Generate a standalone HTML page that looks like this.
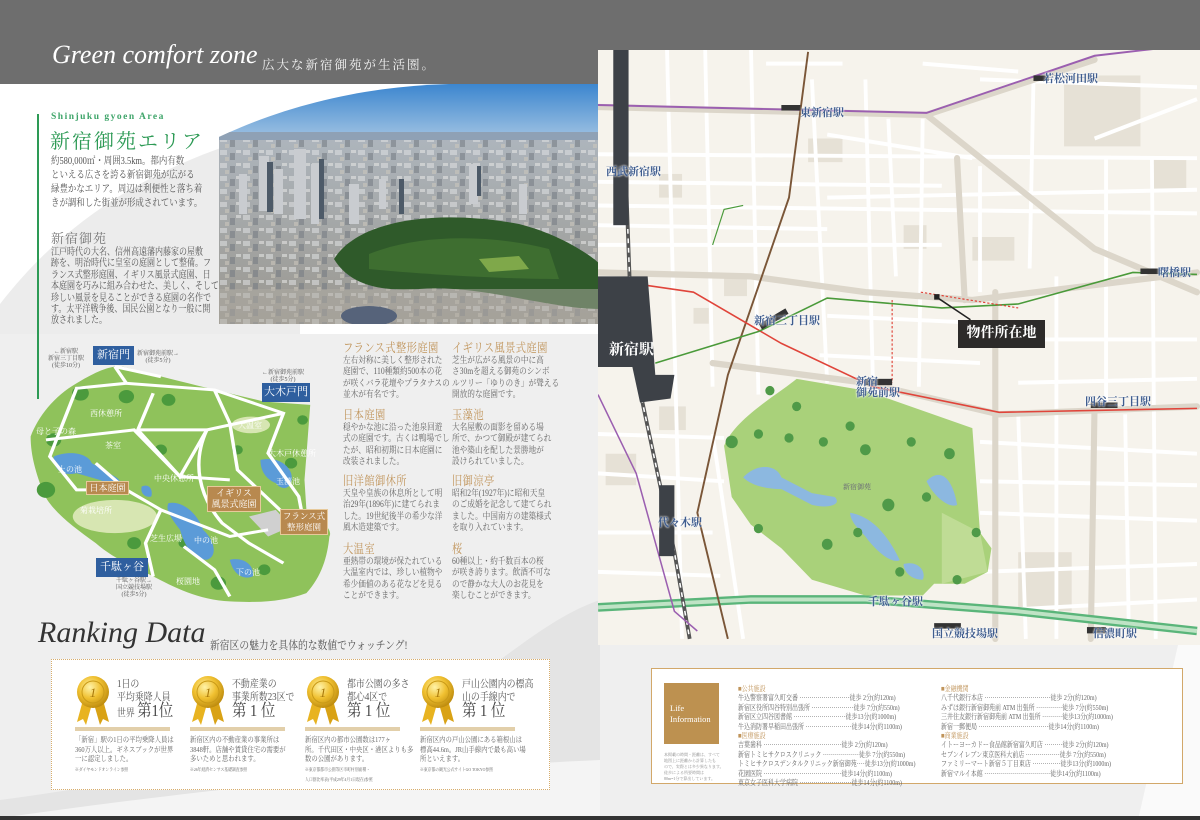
<!DOCTYPE html>
<html><head><meta charset="utf-8">
<style>
*{margin:0;padding:0;box-sizing:border-box}
body{width:1200px;height:820px;overflow:hidden;background:#efefef;font-family:"Liberation Serif","Noto Serif CJK SC",serif;position:relative;color:#555}
.a{position:absolute;white-space:nowrap}
.sx{transform-origin:0 0}
.p{position:absolute;font-size:9px;line-height:11.4px;color:#666;white-space:nowrap;transform:scaleX(.85);transform-origin:0 0}
.h{position:absolute;font-size:12.5px;color:#c0945a;letter-spacing:0.5px;transform:scaleX(.82);transform-origin:0 0;white-space:nowrap}
.st{position:absolute;font-size:11px;font-weight:bold;color:#3f5d8f;white-space:nowrap;text-shadow:0 0 2px #fff,0 0 2px #fff}
.gb{position:absolute;background:#2f5f9f;color:#fff;font-size:11px;text-align:center}
.tb{position:absolute;background:#b8894f;color:#fff;font-size:9px;text-align:center;line-height:11px;border:1px solid #e7c99a}
.sm{position:absolute;font-size:6px;color:#555;line-height:7px;text-align:center;white-space:nowrap}
.rk{position:absolute;font-size:10.5px;line-height:13px;color:#555;white-space:nowrap;transform:scaleX(.85);transform-origin:0 0}
.rk b{font-size:17px;font-weight:normal;color:#444;line-height:13px}
.rb{position:absolute;font-size:7.5px;line-height:9.6px;color:#666;white-space:nowrap;transform:scaleX(.85);transform-origin:0 0}
.li{position:absolute;font-size:7.5px;line-height:9.4px;color:#666;white-space:pre;transform:scaleX(.8);transform-origin:0 0}
.li span{color:#c0945a}
.ml{position:absolute;font-size:8px;color:#fff;white-space:nowrap}
</style></head><body>
<!-- header -->
<div class="a" style="left:0;top:0;width:1200px;height:50px;background:#6e6e6e"></div>
<div class="a" style="left:0;top:0;width:598px;height:84px;background:#6e6e6e"></div>
<div class="a" style="left:52px;top:40px;font-size:26px;font-style:italic;color:#fff;font-family:'Liberation Serif',serif">Green comfort zone</div>
<div class="a" style="left:262px;top:55px;font-size:12.5px;color:#f2f2f2;letter-spacing:2px">広大な新宿御苑が生活圏。</div>

<!-- left top white area and swoosh -->
<svg class="a" style="left:0;top:84px" width="600" height="270">
<rect width="600" height="270" fill="#fff"/>
<path d="M0 220 C70 130 160 75 300 40 L300 270 L0 270Z" fill="#ececec"/>
<path d="M0 250 L0 270 L600 270 L600 250Z" fill="#efefef"/>
</svg>
<!-- photo -->
<svg class="a" style="left:219px;top:84px" width="381" height="240">
<defs>
<linearGradient id="sky" x1="0" y1="0" x2="0" y2="1"><stop offset="0" stop-color="#3c86cf"/><stop offset="1" stop-color="#a9c8e4"/></linearGradient>
<linearGradient id="city" x1="0" y1="0" x2="0" y2="1"><stop offset="0" stop-color="#aeb6be"/><stop offset="1" stop-color="#9a978f"/></linearGradient>
<pattern id="bld" width="23" height="13" patternUnits="userSpaceOnUse">
<rect x="1" y="1" width="7" height="5" fill="#dfe1e2"/><rect x="11" y="4" width="5" height="7" fill="#737981"/><rect x="6" y="8" width="4" height="4" fill="#cdc8bd"/><rect x="17" y="1" width="5" height="3" fill="#e8e8e6"/>
</pattern>
<clipPath id="pc"><path d="M0 53 C70 20 150 2 230 0 L381 0 L381 240 L0 240Z"/></clipPath>
</defs>
<g clip-path="url(#pc)">
<rect width="381" height="60" fill="url(#sky)"/>
<rect y="48" width="381" height="192" fill="url(#city)"/>
<rect y="56" width="381" height="184" fill="url(#bld)" opacity=".55"/>
<rect y="48" width="381" height="8" fill="#8fa1b5"/>
<g fill="#c9ccd0">
<rect x="20" y="90" width="8" height="40"/><rect x="40" y="72" width="10" height="55"/><rect x="55" y="85" width="9" height="45"/><rect x="75" y="65" width="12" height="70"/><rect x="92" y="80" width="8" height="60"/><rect x="130" y="100" width="10" height="40"/><rect x="160" y="95" width="7" height="30"/><rect x="250" y="80" width="9" height="40"/><rect x="300" y="100" width="8" height="30"/>
</g>
<g fill="#4d5a68"><rect x="48" y="78" width="6" height="50"/><rect x="100" y="75" width="5" height="60"/><rect x="180" y="95" width="5" height="35"/><rect x="258" y="82" width="4" height="30"/></g>
<path d="M115 175 C140 135 220 125 300 140 C340 150 370 170 381 180 L381 225 C330 225 260 200 200 205 C160 208 130 200 115 175Z" fill="#2f5a2a"/>
<path d="M150 170 C200 150 270 150 330 165 L340 195 C280 195 200 190 150 185Z" fill="#3e6e30"/>
<path d="M260 175 L300 172 L310 185 L270 188Z" fill="#7fa84a"/>
<rect y="205" width="381" height="35" fill="#b0aca4" opacity=".5"/>
<ellipse cx="150" cy="232" rx="28" ry="10" fill="#56637a"/>
</g>
</svg>
<!-- left text -->
<div class="a" style="left:37px;top:114px;width:2px;height:285px;background:#2d9a55"></div>
<div class="a" style="left:51px;top:112px;font-size:9.5px;color:#3fa56a;letter-spacing:1.5px;font-weight:bold">Shinjuku gyoen Area</div>
<div class="a" style="left:50px;top:125px;font-size:20px;color:#2d9a55;letter-spacing:2px">新宿御苑エリア</div>
<div class="p" style="left:51px;top:155px;font-size:10.3px;line-height:14px;color:#555;transform:scaleX(.82)">約580,000㎡・周囲3.5km。都内有数<br>といえる広さを誇る新宿御苑が広がる<br>緑豊かなエリア。周辺は利便性と落ち着<br>きが調和した街並が形成されています。</div>
<div class="a" style="left:51px;top:228px;font-size:13px;color:#777;letter-spacing:1px">新宿御苑</div>
<div class="p" style="left:51px;top:247px;font-size:10px;line-height:11.4px;color:#555;transform:scaleX(.8)">江戸時代の大名、信州高遠藩内藤家の屋敷<br>跡を、明治時代に皇室の庭園として整備。フ<br>ランス式整形庭園、イギリス風景式庭園、日<br>本庭園を巧みに組み合わせた、美しく、そして<br>珍しい風景を見ることができる庭園の名作で<br>す。太平洋戦争後、国民公園となり一般に開<br>放されました。</div>

<!-- park illustration -->
<svg class="a" style="left:0;top:330px" width="340" height="280">
<g transform="scale(0.383,0.333)" >
<path d="M80 320 C100 260 140 200 200 160 C250 125 290 105 320 110 C420 140 560 180 690 215 L810 225 C805 300 800 380 795 450 L800 540 C840 570 870 600 860 620 C855 680 840 740 800 790 C740 815 680 820 600 815 C520 812 450 770 400 740 C350 710 300 690 250 640 C190 590 130 540 110 480 C95 430 80 380 80 320Z" fill="#8fc25b"/>
<g fill="#4b9a3d">
<circle cx="210" cy="190" r="22"/><circle cx="330" cy="200" r="20"/><circle cx="440" cy="210" r="18"/><circle cx="140" cy="330" r="20"/><circle cx="420" cy="360" r="16"/><circle cx="120" cy="480" r="24"/><circle cx="350" cy="640" r="18"/><circle cx="570" cy="760" r="20"/><circle cx="760" cy="400" r="16"/><circle cx="620" cy="360" r="14"/><circle cx="260" cy="570" r="14"/><circle cx="480" cy="640" r="14"/><circle cx="690" cy="720" r="16"/><circle cx="790" cy="270" r="14"/>
</g>
<ellipse cx="300" cy="560" rx="110" ry="50" fill="#d7e6b2"/>
<ellipse cx="655" cy="285" rx="50" ry="25" fill="#d7e6b2"/>
<path d="M650 560 L720 540 L760 590 L700 620Z" fill="#d0d0d0"/>
<g fill="#5b9bd8">
<path d="M140 380 C180 360 230 370 240 400 L300 440 C330 460 300 470 260 450 L200 430 C160 440 140 420 140 380Z"/>
<path d="M440 520 C480 510 520 560 530 600 C560 630 570 680 540 690 C500 690 480 640 470 600 C450 570 430 540 440 520Z"/>
<path d="M680 390 C720 380 750 400 760 430 C770 470 740 490 720 460 C700 450 680 430 680 390Z"/>
<path d="M600 690 C640 680 665 710 660 740 C640 750 610 740 600 690Z"/>
<path d="M370 470 C390 460 400 480 395 500 C380 505 365 490 370 470Z"/>
</g>
<g fill="none" stroke="#fff" stroke-width="9">
<path d="M300 110 L330 160 L200 175 L130 380 L200 480 L330 480 L420 540 L380 640 L400 740"/>
<path d="M330 160 L560 180 L740 250 L700 370 L780 500 L790 560"/>
<path d="M400 190 L360 300 L470 440 L540 300 L740 250"/>
<path d="M120 330 L350 300 L470 440 L600 450"/>
<path d="M540 300 C500 400 520 500 580 580 L650 640 L740 700"/>
<path d="M360 300 L440 300 L540 300"/>
<path d="M420 540 L600 620 L700 600"/>
<path d="M300 110 L420 140"/>
<path d="M560 180 L600 280 L620 420 L740 550"/>
<path d="M480 650 L560 720 L600 800"/>
<path d="M250 400 L330 480"/>
</g>
</g>
</svg>
<div class="gb" style="left:93px;top:346px;width:41px;height:19px;line-height:19px">新宿門</div>
<div class="gb" style="left:262px;top:383px;width:48px;height:19px;line-height:19px">大木戸門</div>
<div class="gb" style="left:96px;top:558px;width:52px;height:19px;line-height:19px">千駄ヶ谷門</div>
<div class="tb" style="left:86px;top:481px;width:43px;height:14px;line-height:12px">日本庭園</div>
<div class="tb" style="left:207px;top:486px;width:54px;height:26px;padding-top:1px">イギリス<br>風景式庭園</div>
<div class="tb" style="left:280px;top:509px;width:48px;height:26px;padding-top:1px;font-size:8.5px">フランス式<br>整形庭園</div>
<div class="sm" style="left:48px;top:349px">←新宿駅<br>新宿三丁目駅<br>(徒歩10分)</div>
<div class="sm" style="left:137px;top:351px">新宿御苑前駅→<br>(徒歩5分)</div>
<div class="sm" style="left:262px;top:370px">←新宿御苑前駅<br>(徒歩5分)</div>
<div class="sm" style="left:116px;top:578px">千駄ヶ谷駅→<br>国立競技場駅<br>(徒歩5分)</div>
<div class="ml" style="left:90px;top:408px">西休憩所</div>
<div class="ml" style="left:36px;top:426px">母と子の森</div>
<div class="ml" style="left:58px;top:464px">上の池</div>
<div class="ml" style="left:105px;top:440px">茶室</div>
<div class="ml" style="left:154px;top:473px">中央休憩所</div>
<div class="ml" style="left:80px;top:505px">菊栽培所</div>
<div class="ml" style="left:150px;top:533px">芝生広場</div>
<div class="ml" style="left:194px;top:535px">中の池</div>
<div class="ml" style="left:238px;top:420px">大温室</div>
<div class="ml" style="left:268px;top:448px">大木戸休憩所</div>
<div class="ml" style="left:276px;top:476px">玉藻池</div>
<div class="ml" style="left:236px;top:567px">下の池</div>
<div class="ml" style="left:176px;top:576px">桜園地</div>

<!-- garden text columns -->
<div class="h" style="left:343px;top:338px">フランス式整形庭園</div>
<div class="p" style="left:343px;top:355px">左右対称に美しく整形された<br>庭園で、110種類約500本の花<br>が咲くバラ花壇やプラタナスの<br>並木が有名です。</div>
<div class="h" style="left:343px;top:405px">日本庭園</div>
<div class="p" style="left:343px;top:422px">穏やかな池に沿った池泉回遊<br>式の庭園です。古くは鴨場でし<br>たが、昭和初期に日本庭園に<br>改装されました。</div>
<div class="h" style="left:343px;top:471px">旧洋館御休所</div>
<div class="p" style="left:343px;top:488px">天皇や皇族の休息所として明<br>治29年(1896年)に建てられま<br>した。19世紀後半の希少な洋<br>風木造建築です。</div>
<div class="h" style="left:343px;top:539px">大温室</div>
<div class="p" style="left:343px;top:556px">亜熱帯の環境が保たれている<br>大温室内では、珍しい植物や<br>希少価値のある花などを見る<br>ことができます。</div>
<div class="h" style="left:452px;top:338px">イギリス風景式庭園</div>
<div class="p" style="left:452px;top:355px">芝生が広がる風景の中に高<br>さ30mを超える御苑のシンボ<br>ルツリー「ゆりのき」が聳える<br>開放的な庭園です。</div>
<div class="h" style="left:452px;top:405px">玉藻池</div>
<div class="p" style="left:452px;top:422px">大名屋敷の面影を留める場<br>所で、かつて御殿が建てられ<br>池や築山を配した景勝地が<br>設けられていました。</div>
<div class="h" style="left:452px;top:471px">旧御涼亭</div>
<div class="p" style="left:452px;top:488px">昭和2年(1927年)に昭和天皇<br>のご成婚を記念して建てられ<br>ました。中国南方の建築様式<br>を取り入れています。</div>
<div class="h" style="left:452px;top:539px">桜</div>
<div class="p" style="left:452px;top:556px">60種以上・約千数百本の桜<br>が咲き誇ります。飲酒不可な<br>ので静かな大人のお花見を<br>楽しむことができます。</div>

<!-- ranking bg -->
<svg class="a" style="left:0;top:600px" width="600" height="218">
<path d="M500 60 C540 30 570 10 600 0 L600 218 L0 218 L0 200 C150 180 300 150 500 60Z" fill="#e4e4e4"/>
<path d="M0 218 C200 190 380 170 600 160 L600 218Z" fill="#f4f4f4"/>
</svg>
<div class="a" style="left:38px;top:616px;font-size:30px;font-style:italic;color:#333;font-family:'Liberation Serif',serif">Ranking Data</div>
<div class="a sx" style="left:210px;top:637px;font-size:11.5px;color:#555;transform:scaleX(.85)">新宿区の魅力を具体的な数値でウォッチング!</div>
<div class="a" style="left:51px;top:659px;width:499px;height:131px;background:#fff;border:1px dotted #d7ad6c"></div>

<svg width="0" height="0" style="position:absolute"><defs>
<radialGradient id="gold" cx=".4" cy=".35" r=".7"><stop offset="0" stop-color="#fff3a8"/><stop offset=".5" stop-color="#f0c030"/><stop offset="1" stop-color="#b8860b"/></radialGradient>
<g id="medal">
<path d="M-10 8 L-16 30 L-10 27 L-7 33 L-1 12Z" fill="#e8b320"/>
<path d="M10 8 L16 30 L10 27 L7 33 L1 12Z" fill="#d9a215"/>
<circle r="16" fill="url(#gold)"/>
<circle r="11" fill="none" stroke="#c99a18" stroke-width="1"/>
<text y="5" text-anchor="middle" font-size="13" font-style="italic" fill="#a8780a" font-family="Liberation Serif">1</text>
</g></defs></svg>

<svg class="a" style="left:75px;top:674px" width="40" height="52"><use href="#medal" x="18" y="18"/></svg>
<svg class="a" style="left:190px;top:674px" width="40" height="52"><use href="#medal" x="18" y="18"/></svg>
<svg class="a" style="left:305px;top:674px" width="40" height="52"><use href="#medal" x="18" y="18"/></svg>
<svg class="a" style="left:420px;top:674px" width="40" height="52"><use href="#medal" x="18" y="18"/></svg>

<div class="rk" style="left:117px;top:678px">1日の<br>平均乗降人員<br>世界 <b>第1位</b></div>
<div class="rk" style="left:232px;top:678px">不動産業の<br>事業所数23区で<br><b>第 1 位</b></div>
<div class="rk" style="left:347px;top:678px">都市公園の多さ<br>都心4区で<br><b>第 1 位</b></div>
<div class="rk" style="left:462px;top:678px">戸山公園内の標高<br>山の手線内で<br><b>第 1 位</b></div>
<div class="a" style="left:75px;top:727px;width:95px;height:4px;background:#e2cfaa"></div>
<div class="a" style="left:190px;top:727px;width:95px;height:4px;background:#e2cfaa"></div>
<div class="a" style="left:305px;top:727px;width:95px;height:4px;background:#e2cfaa"></div>
<div class="a" style="left:420px;top:727px;width:95px;height:4px;background:#e2cfaa"></div>
<div class="rb" style="left:75px;top:735px">「新宿」駅の1日の平均乗降人員は<br>360万人以上。ギネスブックが世界<br>一に認定しました。<br><span style="font-size:4.5px">※ダイヤモンドオンライン参照</span></div>
<div class="rb" style="left:190px;top:735px">新宿区内の不動産業の事業所は<br>3848軒。店舗や賃貸住宅の需要が<br>多いためと思われます。<br><span style="font-size:4.5px">※26年経済センサス基礎調査参照</span></div>
<div class="rb" style="left:305px;top:735px">新宿区内の都市公園数は177ヶ<br>所。千代田区・中央区・港区よりも多<br>数の公園があります。<br><span style="font-size:4.5px">※東京都都市公園等区市町村別面積・<br>人口割比率表(平成29年4月1日現在)参照</span></div>
<div class="rb" style="left:420px;top:735px">新宿区内の戸山公園にある箱根山は<br>標高44.6m。JR山手線内で最も高い場<br>所といえます。<br><span style="font-size:4.5px">※東京都の観光公式サイトGO TOKYO参照</span></div>

<!-- right page map -->
<svg class="a" style="left:598px;top:50px" width="602" height="595" viewBox="598 50 602 595">
<rect x="598" y="50" width="602" height="595" fill="#f6f3ec"/>
<g transform="translate(598,40) scale(0.382,0.394)">
<g fill="#e6e1d6">
<rect x="1220" y="90" width="200" height="180"/><rect x="550" y="250" width="90" height="60"/><rect x="800" y="470" width="60" height="60"/><rect x="980" y="500" width="110" height="60"/><rect x="1100" y="1300" width="140" height="150"/><rect x="20" y="1050" width="80" height="80"/><rect x="160" y="340" width="60" height="60"/><rect x="250" y="680" width="40" height="40"/><rect x="160" y="930" width="70" height="60"/><rect x="1450" y="300" width="90" height="80"/><rect x="330" y="600" width="60" height="50"/>
</g>
<g stroke="#fff" stroke-width="10" fill="none">
<path d="M0 290 L1568 300"/><path d="M0 420 L1568 440"/><path d="M0 520 L900 520"/><path d="M0 1000 L330 1010"/><path d="M0 1100 L330 1120"/><path d="M1000 1020 L1568 1050"/><path d="M1000 1200 L1568 1220"/><path d="M1000 1350 L1568 1330"/><path d="M1040 760 L1568 760"/><path d="M600 400 L1568 380"/><path d="M180 0 L220 1520"/><path d="M400 0 L420 900"/><path d="M700 100 L720 880"/><path d="M850 200 L840 880"/><path d="M1200 600 L1200 1520"/><path d="M1450 300 L1460 1520"/><path d="M1140 100 L1130 580"/><path d="M300 1000 L380 1520"/><path d="M600 240 L980 300"/><path d="M1568 150 L1300 250"/><path d="M440 60 L640 60"/><path d="M850 60 L1100 80"/>
<path d="M0 360 L900 370"/><path d="M0 470 L600 480"/><path d="M600 700 L1040 720"/><path d="M580 800 L1000 820"/><path d="M1100 870 L1568 860"/><path d="M1000 1120 L1568 1130"/><path d="M1000 1450 L1568 1420"/><path d="M280 0 L300 880"/><path d="M560 100 L600 870"/><path d="M1000 320 L1000 640"/><path d="M1330 300 L1330 920"/><path d="M1100 950 L1120 1520"/><path d="M1380 950 L1390 1520"/><path d="M0 1250 L300 1250"/><path d="M0 1350 L320 1360"/><path d="M760 200 L780 600"/><path d="M1000 100 L1568 120"/>
</g>
<g stroke="#dcd6ca" stroke-width="16" fill="none" stroke-linecap="round">
<path d="M0 170 L860 190 L1300 50"/>
<path d="M0 590 L400 600 L700 640 L980 660 L1568 590"/>
<path d="M860 190 L1300 530 L1568 640"/>
<path d="M1040 640 L1040 1520"/>
<path d="M1300 920 L1290 1520"/>
<path d="M300 820 L700 870 L1050 950 L1568 930"/>
<path d="M940 300 L960 660"/>
</g>
<path d="M0 165 L860 185 L1300 40 L1568 10" stroke="#9b5fb0" stroke-width="5" fill="none"/>
<path d="M0 1440 L400 1420 L700 1420 L1100 1450 L1568 1500" stroke="#5ab57a" stroke-width="22" fill="none"/>
<path d="M0 1440 L400 1420 L700 1420 L1100 1450 L1568 1500" stroke="#bfe3c5" stroke-width="10" fill="none"/>
<path d="M550 30 L500 400 L340 850 L260 1200 L340 1520" stroke="#7a5638" stroke-width="5" fill="none"/>
<path d="M60 0 L90 800 L200 1300 L240 1520" stroke="#555" stroke-width="10" fill="none"/>
<path d="M60 0 L90 800 L200 1300 L240 1520" stroke="#fff" stroke-width="4" stroke-dasharray="12 12" fill="none"/>
<path d="M0 900 L100 1100 L200 1450 L260 1500" stroke="#9b5fb0" stroke-width="4" fill="none"/>
<path d="M0 605 L250 640 L480 770 L720 880 L1050 945 L1568 935" stroke="#e0443a" stroke-width="4" fill="none"/>
<path d="M150 820 L420 740 L600 655 L900 680 L1100 670 L1400 590 L1568 595" stroke="#4a9a3a" stroke-width="4" fill="none"/>
<path d="M380 420 L330 430 L300 520" stroke="#4a9a3a" stroke-width="3" fill="none"/>
<path d="M0 600 L130 600 L150 850 L200 850 L190 910 L110 920 L90 830 L0 830Z" fill="#3d4147"/>
<rect x="40" y="20" width="40" height="450" fill="#3d4147"/>
<rect x="160" y="1130" width="40" height="180" fill="#3d4147"/>
<path d="M330 1030 C360 960 470 900 520 860 L700 890 L980 985 L1000 1250 L1030 1290 L1020 1350 L960 1380 L880 1380 L850 1410 L700 1410 L560 1370 L480 1290 L400 1230 L350 1160Z" fill="#a9d17a"/>
<path d="M900 1200 L1000 1250 L1020 1350 L900 1380Z" fill="#bfdc95"/>
<g fill="#8cb8e0">
<path d="M380 1110 C420 1070 470 1080 480 1110 L560 1150 L620 1160 C640 1180 600 1190 560 1180 L480 1140 C440 1140 400 1130 380 1110Z"/>
<path d="M660 1200 C720 1210 760 1260 790 1320 C770 1330 730 1300 700 1260 C680 1240 660 1220 660 1200Z"/>
<path d="M860 1120 C900 1080 930 1120 940 1180 C920 1190 880 1160 860 1120Z"/>
<path d="M800 1330 C840 1320 860 1350 850 1370 C820 1370 800 1350 800 1330Z"/>
</g>
<g fill="#4f9a48">
<circle cx="350" cy="1020" r="16"/><circle cx="420" cy="1000" r="12"/><circle cx="500" cy="1010" r="12"/><circle cx="520" cy="930" r="12"/><circle cx="590" cy="1020" r="12"/><circle cx="660" cy="980" r="12"/><circle cx="700" cy="1040" r="14"/><circle cx="820" cy="1020" r="12"/><circle cx="920" cy="1050" r="14"/><circle cx="760" cy="1180" r="16"/><circle cx="860" cy="1160" r="12"/><circle cx="600" cy="1280" r="14"/><circle cx="680" cy="1250" r="12"/><circle cx="790" cy="1350" r="12"/><circle cx="990" cy="1250" r="12"/><circle cx="940" cy="1370" r="12"/><circle cx="450" cy="890" r="12"/><circle cx="420" cy="1240" r="12"/>
</g>
<path d="M845 640 L1100 680" stroke="#e0443a" stroke-width="3" stroke-dasharray="6 5" fill="none"/>
<path d="M770 660 L770 870" stroke="#e0443a" stroke-width="3" stroke-dasharray="6 5" fill="none"/>
<rect x="880" y="645" width="14" height="14" fill="#222"/>
<path d="M890 655 L975 710" stroke="#222" stroke-width="4"/>
<g fill="#333"><rect x="480" y="165" width="50" height="14"/><rect x="420" y="700" width="80" height="16" transform="rotate(-30 460 708)"/><rect x="700" y="860" width="70" height="16"/><rect x="1420" y="580" width="50" height="14"/><rect x="1140" y="90" width="40" height="14"/><rect x="1290" y="920" width="70" height="14"/><rect x="880" y="1480" width="70" height="14"/><rect x="1280" y="1490" width="50" height="16"/></g>
</g>
</svg>
<div class="a" style="left:609px;top:338px;font-size:15px;font-weight:bold;color:#fff">新宿駅</div>
<div class="st" style="left:606px;top:163px">西武新宿駅</div>
<div class="st" style="left:800px;top:104px">東新宿駅</div>
<div class="st" style="left:1043px;top:70px">若松河田駅</div>
<div class="st" style="left:754px;top:312px">新宿三丁目駅</div>
<div class="st" style="left:856px;top:377px;line-height:11px">新宿<br>御苑前駅</div>
<div class="st" style="left:1085px;top:393px">四谷三丁目駅</div>
<div class="st" style="left:1158px;top:264px">曙橋駅</div>
<div class="st" style="left:658px;top:514px">代々木駅</div>
<div class="st" style="left:868px;top:593px">千駄ヶ谷駅</div>
<div class="st" style="left:932px;top:625px">国立競技場駅</div>
<div class="st" style="left:1093px;top:625px">信濃町駅</div>
<div class="a" style="left:843px;top:482px;font-size:7px;color:#667">新宿御苑</div>
<div class="a" style="left:958px;top:320px;width:87px;height:28px;background:#2d2b2a;color:#fff;font-size:14px;line-height:28px;text-align:center;font-weight:bold">物件所在地</div>

<!-- right bottom -->
<svg class="a" style="left:598px;top:645px" width="602" height="175"><path d="M580 0 L602 0 L602 175 L540 175Z" fill="#fafafa"/></svg>
<div class="a" style="left:651px;top:668px;width:532px;height:116px;background:#fff;border:1px solid #d2a86a"></div>
<div class="a" style="left:664px;top:683px;width:55px;height:61px;background:#bd9150;color:#fff;font-size:8.5px;line-height:11px;padding:20px 0 0 6px">Life<br>Information</div>
<div class="a" style="left:664px;top:752px;font-size:4px;line-height:6px;color:#888">本掲載の時間・距離は、すべて<br>地図上に距離から計算したも<br>ので、実際とは多少異なります。<br>徒歩による所要時間は<br>80m=1分で算出しています。</div>
<div class="li" style="left:738px;top:684px"><span>■公共施設</span>
牛込警察署富久町交番 ·························徒歩 2分(約120m)
新宿区役所四谷特別出張所 ·····················徒歩 7分(約550m)
新宿区立四谷図書館 ··························徒歩13分(約1000m)
牛込消防署早稲田出張所 ·······················徒歩14分(約1100m)
<span>■医療施設</span>
吉葉歯科 ·······································徒歩 2分(約120m)
新宿トミヒサクロスクリニック ··················徒歩 7分(約550m)
トミヒサクロスデンタルクリニック新宿御苑····徒歩13分(約1000m)
花園医院 ·······································徒歩14分(約1100m)
東京女子医科大学病院 ··························徒歩14分(約1100m)</div>
<div class="li" style="left:941px;top:684px"><span>■金融機関</span>
八千代銀行本店 ·································徒歩 2分(約120m)
みずほ銀行新宿御苑前 ATM 出張所 ·············徒歩 7分(約550m)
三井住友銀行新宿御苑前 ATM 出張所 ··········徒歩13分(約1000m)
新宿一郵便局 ···································徒歩14分(約1100m)
<span>■商業施設</span>
イトーヨーカドー食品館新宿富久町店 ·········徒歩 2分(約120m)
セブンイレブン東京医科大前店 ·················徒歩 7分(約550m)
ファミリーマート新宿５丁目東店 ··············徒歩13分(約1000m)
新宿マルイ本館 ·································徒歩14分(約1100m)</div>
<div class="a" style="left:0;top:816px;width:1200px;height:4px;background:#333"></div>
</body></html>
